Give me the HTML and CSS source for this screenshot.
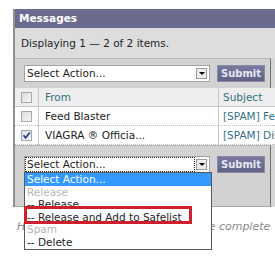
FILE: index.html
```html
<!DOCTYPE HTML>
<html>
<head>
<meta name="viewport" content="width=device-width, initial-scale=1">
<link rel="stylesheet" href="styles.css">
</head>
<body>
    <div class="panel">
        <div class="panel-head">Messages</div>
        <div class="count">Displaying 1 &mdash; 2 of 2 items.</div>
        <div class="actions">
            <div class="select">
                <span class="select-text">Select Action...</span>
                <span class="select-btn"><i></i></span>
            </div>
            <span class="submit">Submit</span>
        </div>
        <div class="grid">
            <div class="cell chk head"><span class="box"></span></div>
            <div class="cell head col">From</div>
            <div class="cell head col subj">Subject</div>

            <div class="cell chk"><span class="box"></span></div>
            <div class="cell col">Feed Blaster</div>
            <div class="cell col subj link">[SPAM] Feed</div>

            <div class="cell chk"><span class="box checked"><svg width="9" height="9" viewBox="0 0 9 9"><polyline points="1.5,4.2 3.6,6.8 7.8,1.5" fill="none" stroke="#263a9c" stroke-width="1.7"/></svg></span></div>
            <div class="cell col">VIAGRA &reg; Officia...</div>
            <div class="cell col subj link">[SPAM] Disc</div>
        </div>
        <div class="actions bottom">
            <div class="select">
                <span class="select-text focus">Select Action...</span>
                <span class="select-btn"><i></i></span>
            </div>
            <span class="submit">Submit</span>

            <!-- open dropdown list -->
            <div class="menu">
                <div class="opt picked">Select Action...</div>
                <div class="opt group">Release</div>
                <div class="opt">-- Release</div>
                <div class="opt">-- Release and Add to Safelist</div>
                <div class="opt group">Spam</div>
                <div class="opt">-- Delete</div>
                <span class="mark"></span>
            </div>
        </div>
    </div>
    <p class="hint">Hint: Released messages all get the complete</p>
</body>
</html>
```

FILE: styles.css
```css
* {
    box-sizing: border-box;
}
html, body {
    min-height: 268px;
}
body {
    margin: 0;
    background-color: #ffffff;
    font-family: "DejaVu Sans", Verdana, sans-serif;
    font-size: 10.5px;
    color: #1e1e1e;
}
/* Outer frame of the quarantine panel */
.panel {
    margin: 9px 0 0 13px;
    width: 262px;
    border-left: 2px solid #8f8f8f;
    background-color: #d6d6d6;
}
.panel-head {
    height: 19px;
    line-height: 19px;
    padding-left: 4px;
    background-color: #6b6a8f;
    color: #ffffff;
    font-weight: bold;
}
.count {
    height: 30px;
    line-height: 30px;
    padding-left: 6px;
    background-color: #dddddd;
}
/* Action bar: select + submit */
.actions {
    position: relative;
    display: flex;
    align-items: center;
    width: 256px;
    height: 30px;
    padding-left: 9px;
    border-top: 1px solid #b7b7b7;
    border-right: 1px solid #6f6f6f;
    background-color: #d2d2d2;
}
.actions.bottom {
    align-items: flex-start;
    height: 62px;
    padding-top: 10px;
    border-bottom: 1px solid #a9a9a9;
}
.select {
    display: flex;
    align-items: center;
    width: 186px;
    height: 17px;
    border: 1px solid #a3a3a3;
    background-color: #ffffff;
}
.select-text {
    flex: 1;
    height: 13px;
    line-height: 13px;
    margin: 0 2px 0 1px;
    padding-left: 1px;
}
.select-text.focus {
    outline: 1px dotted #222222;
}
.select-btn {
    display: flex;
    align-items: center;
    justify-content: center;
    width: 11px;
    height: 11px;
    margin-right: 2px;
    border: 1px solid #9c9c9c;
    background-color: #ececec;
}
.select-btn i {
    width: 0;
    height: 0;
    border-left: 3px solid transparent;
    border-right: 3px solid transparent;
    border-top: 3px solid #000000;
}
.submit {
    width: 48px;
    height: 17px;
    margin-left: 7px;
    line-height: 15px;
    text-align: center;
    font-size: 10px;
    font-weight: bold;
    color: #e6e6f2;
    border: 1px solid #8a89a6;
    background: linear-gradient(#7a799d, #626187);
}
/* Message table */
.grid {
    display: grid;
    grid-template-columns: 23px 180px 1fr;
    background-color: #ffffff;
}
.cell {
    height: 19px;
    line-height: 18px;
    border-bottom: 1px dotted #bdbdbd;
    white-space: nowrap;
    overflow: hidden;
}
.cell.head {
    background-color: #eeeeee;
    border-bottom: 1px solid #c6c6c6;
    color: #33707f;
}
.col {
    padding-left: 6px;
    border-left: 1px solid #c8c8c8;
}
.col.subj {
    padding-left: 4px;
}
.link {
    color: #35708a;
}
.chk {
    display: flex;
    align-items: center;
    padding-left: 6px;
}
.box {
    display: flex;
    align-items: center;
    justify-content: center;
    width: 11px;
    height: 11px;
    border: 1px solid #a8a8a8;
    background: linear-gradient(135deg, #dcdcdc, #f7f7f7);
}
/* The opened dropdown list */
.menu {
    position: absolute;
    z-index: 2;
    left: 9px;
    top: 26px;
    width: 188px;
    border: 1px solid #5a5a5a;
    background-color: #ffffff;
}
.opt {
    height: 12.6px;
    line-height: 12.6px;
    padding-left: 2px;
    white-space: nowrap;
}
.opt.picked {
    background-color: #3399ff;
    color: #ffffff;
}
.opt.group {
    color: #b5b5b5;
}
/* Red annotation box round the safelist option */
.mark {
    position: absolute;
    left: -1px;
    top: 33px;
    width: 168px;
    height: 18px;
    border: 3px solid #cf1f2b;
}
.hint {
    margin: 13px 0 0 17px;
    line-height: 13px;
    font-size: 11px;
    font-style: italic;
    color: #8a8a8a;
    white-space: nowrap;
    overflow: hidden;
}
```
